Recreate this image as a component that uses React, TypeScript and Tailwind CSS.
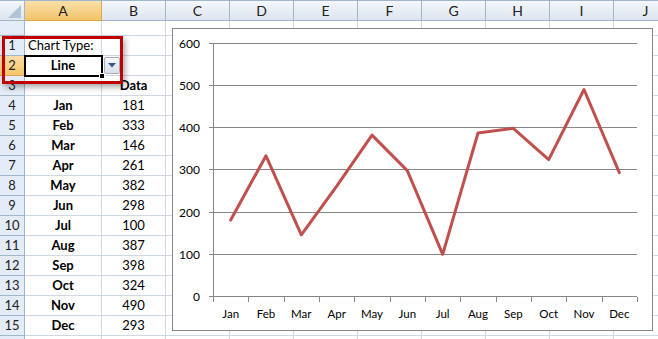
import React from "react";

const cols = [
  { l: "A", w: 77 },
  { l: "B", w: 64 },
  { l: "C", w: 64 },
  { l: "D", w: 64 },
  { l: "E", w: 64 },
  { l: "F", w: 64 },
  { l: "G", w: 64 },
  { l: "H", w: 64 },
  { l: "I", w: 64 },
  { l: "J", w: 64 },
];

const months = ["Jan", "Feb", "Mar", "Apr", "May", "Jun", "Jul", "Aug", "Sep", "Oct", "Nov", "Dec"];
const values = [181, 333, 146, 261, 382, 298, 100, 387, 398, 324, 490, 293];

type RowDef = { label: string; h: number; a?: React.ReactNode; b?: React.ReactNode; aAlign?: string };

const rows: RowDef[] = [
  { label: "", h: 15 },
  { label: "1", h: 20, a: <span className="whitespace-nowrap">Chart Type:</span>, aAlign: "justify-start pl-[3px]" },
  { label: "2", h: 20, a: <span className="font-bold">Line</span> },
  { label: "3", h: 20, b: <span className="font-bold">Data</span> },
  ...months.map((m, i) => ({
    label: String(i + 4),
    h: 20,
    a: <span className="font-bold">{m}</span>,
    b: <span>{values[i]}</span>,
  })),
  { label: "", h: 20 },
];

function Chart() {
  const plotL = 40;
  const plotR = 464;
  const cw = (plotR - plotL) / 12;
  const yv = (v: number) => 267.5 - v * 0.4225;
  const gy = (v: number) => Math.round(267 - v * 0.4225) + 0.5;
  const ticks = [0, 100, 200, 300, 400, 500, 600];
  const pts = values.map((v, i) => `${(plotL + (i + 0.5) * cw).toFixed(1)},${yv(v).toFixed(1)}`).join(" ");
  return (
    <div className="absolute left-[172px] top-[28px] w-[481px] h-[303px] border border-[#868686] bg-white">
      <svg width="479" height="301" viewBox="0 0 479 301" className="block">
        {ticks.map((t) => (
          <g key={t}>
            <line
              x1={36}
              x2={plotR}
              y1={gy(t)}
              y2={gy(t)}
              stroke="#868686"
              strokeWidth={1}
              shapeRendering="crispEdges"
            />
            <text
              x={27}
              y={gy(t)}
              dy="0.36em"
              textAnchor="end"
              fontFamily="Lato, 'Noto Sans', sans-serif"
              fontSize={12}
              fill="#000"
            >
              {t}
            </text>
          </g>
        ))}
        <line x1={40.5} x2={40.5} y1={gy(600)} y2={gy(0)} stroke="#868686" strokeWidth={1} shapeRendering="crispEdges" />
        {Array.from({ length: 13 }).map((_, i) => {
          const x = Math.round(plotL + i * cw) + 0.5;
          return (
            <line key={i} x1={x} x2={x} y1={gy(0)} y2={gy(0) + 5} stroke="#868686" strokeWidth={1} shapeRendering="crispEdges" />
          );
        })}
        {months.map((m, i) => (
          <text
            key={m}
            x={plotL + (i + 0.5) * cw}
            y={285}
            dy="0.36em"
            textAnchor="middle"
            fontFamily="Lato, 'Noto Sans', sans-serif"
            fontSize={11.5}
            fill="#000"
          >
            {m}
          </text>
        ))}
        <polyline points={pts} fill="none" stroke="#C0504D" strokeWidth={3} strokeLinejoin="round" strokeLinecap="round" />
      </svg>
    </div>
  );
}

export default function App() {
  return (
    <div className="relative w-[658px] h-[339px] overflow-hidden bg-white text-black font-['Lato','Noto_Sans',sans-serif]">
      {/* Column headers */}
      <div className="flex h-[21px] border-t border-[#9EB6CE]">
        <div className="relative w-[25px] shrink-0 h-[20px] border-r border-b border-[#9EB6CE] bg-gradient-to-b from-[#F5F8FC] to-[#DCE4EF]">
          <svg width="24" height="19" className="absolute left-0 top-0">
            <polygon points="21,4 21,17 8,17" fill="#B3C3D7" />
          </svg>
        </div>
        {cols.map((c) => (
          <div
            key={c.l}
            style={{ width: c.w }}
            className={
              c.l === "A"
                ? "shrink-0 h-[20px] flex items-center justify-center text-[14px] border-r border-b border-[#E0A54A] bg-gradient-to-b from-[#FADFA8] to-[#F3C467] text-[#222]"
                : "shrink-0 h-[20px] flex items-center justify-center text-[14px] border-r border-b border-[#9EB6CE] bg-gradient-to-b from-[#F5F8FC] to-[#DCE4EF] text-[#222]"
            }
          >
            {c.l}
          </div>
        ))}
      </div>

      {/* Rows */}
      {rows.map((r, ri) => (
        <div key={ri} className="flex" style={{ height: r.h }}>
          <div
            className={
              r.label === "2"
                ? "w-[25px] shrink-0 flex items-center justify-center text-[13px] border-r border-b border-[#E0A54A] bg-gradient-to-b from-[#FADFA8] to-[#F3C467] text-[#222]"
                : "w-[25px] shrink-0 flex items-center justify-center text-[13px] border-r border-b border-[#9EB6CE] bg-[#E4ECF7] text-[#222]"
            }
          >
            {r.label}
          </div>
          {cols.map((c, ci) => (
            <div
              key={c.l}
              style={{ width: c.w }}
              className={
                "shrink-0 flex items-center text-[13px] border-r border-b border-[#D0D7E5] overflow-visible " +
                (ci === 0 && r.aAlign ? r.aAlign : "justify-center")
              }
            >
              {ci === 0 ? r.a : ci === 1 ? r.b : null}
            </div>
          ))}
        </div>
      ))}

      {/* Selected cell A2 */}
      <div className="absolute left-[24px] top-[55px] w-[79px] h-[22px] border-2 border-black pointer-events-none" />
      <div className="absolute left-[99px] top-[73px] w-[6px] h-[6px] bg-black border border-white" />

      {/* Dropdown button */}
      <div className="absolute left-[104px] top-[57px] w-[16px] h-[17px] rounded-[2px] border border-[#A5AEBB] bg-gradient-to-b from-[#F6F8FA] to-[#D9E0E8] flex items-center justify-center">
        <svg width="8" height="5" viewBox="0 0 8 5">
          <polygon points="0,0 8,0 4,4.5" fill="#3A5585" />
        </svg>
      </div>

      {/* Red highlight rectangle */}
      <div className="absolute left-[2px] top-[36px] w-[121px] h-[48px] border-[3px] border-[#C00000] shadow-[2px_3px_6px_rgba(0,0,0,0.35)] pointer-events-none" />

      <Chart />
    </div>
  );
}
